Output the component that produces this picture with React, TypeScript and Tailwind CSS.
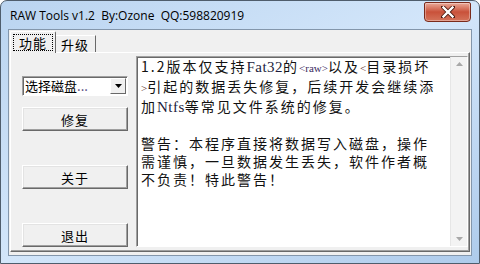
const cjk = "font-['SimSun','Noto_Sans_CJK_SC',sans-serif]";

function ClassicButton({ label }: { label: string }) {
  return (
    <div className="h-[24px] w-[106px] flex items-center justify-center bg-[#f0f0f0] border border-t-white border-l-white border-r-[#696969] border-b-[#696969] shadow-[inset_-1px_-1px_0_#a0a0a0,inset_1px_1px_0_#e3e3e3]">
      <span className={`${cjk} text-[13px] text-black leading-none tracking-[1px]`}>{label}</span>
    </div>
  );
}

export default function App() {
  return (
    <div className="w-[480px] h-[264px] bg-white">
      <div className="w-full h-full flex flex-col px-[7px] pb-[7px] rounded-t-[7px] border border-[#4f5d6c] bg-gradient-to-br from-[#bad4f0] via-[#d3e6fa] to-[#aecbeb]">
        {/* title bar */}
        <div className="h-[29px] flex justify-between">
          <div className="pl-[2px] pt-[7px] font-['Open_Sans',sans-serif] text-[12px] leading-[16px] text-black whitespace-pre">
            RAW Tools v1.2  By:Ozone  QQ:598820919
          </div>
          <div className="mr-[1px] mt-[1px] w-[47px] h-[20px] rounded-b-[4px] rounded-t-[2px] border border-[#7a2b1c] bg-gradient-to-b from-[#e9a898] via-[#c9513a] to-[#d4735a] flex items-center justify-center shadow-[inset_0_0_0_1px_rgba(255,255,255,0.35)]">
            <svg width="14" height="12" viewBox="0 0 14 12">
              <path d="M2 1 L12 11 M12 1 L2 11" stroke="#4a1a10" strokeWidth="4" strokeLinecap="square" />
              <path d="M2.5 1.5 L11.5 10.5 M11.5 1.5 L2.5 10.5" stroke="#ffffff" strokeWidth="2.4" strokeLinecap="square" />
            </svg>
          </div>
        </div>

        {/* client area */}
        <div className="flex-1 flex flex-col border border-[#8396ab] bg-[#f0f0f0]">
          {/* tabs */}
          <div className="h-[22px] flex items-end pl-[1px]">
            <div className="relative z-10 -mb-[1px] h-[22px] w-[46px] bg-[#f0f0f0] border-l border-t border-r border-l-white border-t-white border-r-[#696969] rounded-t-[2px] flex items-start justify-center pt-[2px]">
              <div className={`${cjk} w-[40px] h-[17px] border border-dotted border-black text-[13px] leading-[15px] text-black text-center tracking-[1px]`}>
                功能
              </div>
            </div>
            <div className="h-[17px] w-[41px] -ml-[1px] bg-[#f0f0f0] border-t border-r border-t-white border-r-[#696969] flex items-center justify-center">
              <span className={`${cjk} text-[13px] leading-none text-black tracking-[1px]`}>升级</span>
            </div>
          </div>

          {/* panel */}
          <div className="flex-1 ml-[1px] mr-[1px] mb-[3px] flex border border-t-white border-l-white border-r-[#696969] border-b-[#696969] shadow-[inset_-1px_-1px_0_#a0a0a0] pl-[11px] pt-[3px] pb-[4px] pr-[1px] gap-[8px]">
            {/* left column */}
            <div className="w-[106px] flex flex-col pt-[20px]">
              <div className="h-[20px] w-[106px] flex bg-white border border-t-[#a0a0a0] border-l-[#a0a0a0] border-r-white border-b-white shadow-[inset_1px_1px_0_#696969]">
                <div className={`${cjk} flex-1 pl-[2px] pt-[1px] text-[13px] leading-[16px] text-black whitespace-nowrap`}>
                  选择磁盘<span className="text-[#4a3a7a]">...</span>
                </div>
                <div className="mt-[1px] mr-[1px] w-[16px] h-[16px] bg-[#f0f0f0] border border-t-white border-l-white border-r-[#696969] border-b-[#696969] flex items-center justify-center">
                  <svg width="7" height="4" viewBox="0 0 7 4">
                    <path d="M0 0 H7 L3.5 4 Z" fill="#000" />
                  </svg>
                </div>
              </div>
              <div className="mt-[11px]">
                <ClassicButton label="修复" />
              </div>
              <div className="mt-[34px]">
                <ClassicButton label="关于" />
              </div>
              <div className="mt-[34px]">
                <ClassicButton label="退出" />
              </div>
            </div>

            {/* text box */}
            <div className="flex-1 flex bg-white border border-t-[#a0a0a0] border-l-[#a0a0a0] border-r-white border-b-white shadow-[inset_1px_1px_0_#696969]">
              <div className={`${cjk} flex-1 pl-[4px] pt-0 text-[14px] leading-[18px] tracking-[2px] text-[#111] whitespace-nowrap`}>
                <div>
                  1.2版本仅支持<span className="font-['Liberation_Serif',serif] text-[15px] tracking-[0.5px] text-[#1c1c3c]">Fat32</span>的<span className="font-['Liberation_Serif',serif] text-[11px] tracking-[0px] text-[#3a2a60]">&lt;raw&gt;</span>以及<span className="font-['Liberation_Serif',serif] text-[11px] tracking-[0px] text-[#5a2a20]">&lt;</span>目录损坏
                </div>
                <div>
                  <span className="font-['Liberation_Serif',serif] text-[11px] tracking-[0px] text-[#5a2a20]">&gt;</span>引起的数据丢失修复，后续开发会继续添
                </div>
                <div>
                  加<span className="font-['Liberation_Serif',serif] text-[15px] tracking-[0.5px] text-[#1c1c3c]">Ntfs</span>等常见文件系统的修复。
                </div>
                <div>&nbsp;</div>
                <div>警告：本程序直接将数据写入磁盘，操作</div>
                <div>需谨慎，一旦数据发生丢失，软件作者概</div>
                <div>不负责！特此警告！</div>
              </div>
              <div className="w-[17px] flex flex-col justify-between bg-[#f3f3f3] border-l border-[#e6e6e6] py-[5px] items-center">
                <svg width="7" height="4" viewBox="0 0 7 4">
                  <path d="M0 4 H7 L3.5 0 Z" fill="#a8a8a8" />
                </svg>
                <svg width="7" height="4" viewBox="0 0 7 4">
                  <path d="M0 0 H7 L3.5 4 Z" fill="#a8a8a8" />
                </svg>
              </div>
            </div>
          </div>
        </div>
      </div>
    </div>
  );
}
